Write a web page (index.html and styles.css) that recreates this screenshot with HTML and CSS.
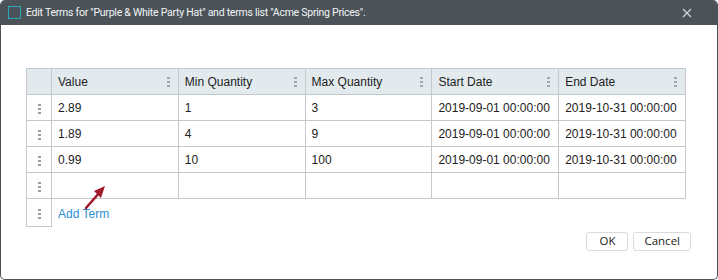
FILE: index.html
```html
<!DOCTYPE html>
<html lang="en">
<head>
<meta charset="UTF-8">
<title>Edit Terms</title>
<link rel="stylesheet" href="styles.css">
</head>
<body>

<div class="dialog">
    <div class="titlebar">
        <span class="title-icon"></span>
        <span class="title-text">Edit Terms for "Purple &amp; White Party Hat" and terms list "Acme Spring Prices".</span>
        <svg class="close" width="10" height="10" viewBox="0 0 10 10">
            <path d="M1 1 L9 9 M9 1 L1 9" stroke="#d4d8db" stroke-width="1.2" fill="none"/>
        </svg>
    </div>

    <div class="body">
        <div class="grid-wrap">
            <table class="grid">
                <colgroup>
                    <col class="col-handle">
                    <col><col><col><col><col>
                </colgroup>
                <thead>
                    <tr>
                        <th></th>
                        <th><div class="th-inner">Value<span class="dots"></span></div></th>
                        <th><div class="th-inner">Min Quantity<span class="dots"></span></div></th>
                        <th><div class="th-inner">Max Quantity<span class="dots"></span></div></th>
                        <th><div class="th-inner">Start Date<span class="dots"></span></div></th>
                        <th><div class="th-inner">End Date<span class="dots"></span></div></th>
                    </tr>
                </thead>
                <tbody>
                    <tr>
                        <td class="handle"><span class="dots"></span></td>
                        <td>2.89</td><td>1</td><td>3</td>
                        <td>2019-09-01 00:00:00</td><td>2019-10-31 00:00:00</td>
                    </tr>
                    <tr>
                        <td class="handle"><span class="dots"></span></td>
                        <td>1.89</td><td>4</td><td>9</td>
                        <td>2019-09-01 00:00:00</td><td>2019-10-31 00:00:00</td>
                    </tr>
                    <tr>
                        <td class="handle"><span class="dots"></span></td>
                        <td>0.99</td><td>10</td><td>100</td>
                        <td>2019-09-01 00:00:00</td><td>2019-10-31 00:00:00</td>
                    </tr>
                    <tr>
                        <td class="handle"><span class="dots"></span></td>
                        <td></td><td></td><td></td><td></td><td></td>
                    </tr>
                    <tr class="add-row">
                        <td class="handle"><span class="dots"></span></td>
                        <td colspan="5" class="add-cell"><a href="#" class="add-link">Add Term</a></td>
                    </tr>
                </tbody>
            </table>

            <!-- pointer arrow drawn over the empty row -->
            <svg class="arrow" width="24" height="26" viewBox="0 0 24 26">
                <path d="M2 24 L16 8" stroke="#a01c2a" stroke-width="2.6" stroke-linecap="round" fill="none"/>
                <path d="M21 2 L10 7 L17 14 Z" fill="#a01c2a"/>
            </svg>
        </div>

        <div class="actions">
            <button class="btn btn-ok">OK</button>
            <button class="btn">Cancel</button>
        </div>
    </div>
</div>

</body>
</html>
```

FILE: styles.css
```css
html, body {
    margin: 0;
    padding: 0;
    background: #fff;
}

.dialog {
    width: 718px;
    height: 280px;
    box-sizing: border-box;
    border: 1px solid #4b5359;
    border-top: none;
    border-radius: 5px;
    overflow: hidden;
    display: flex;
    flex-direction: column;
    background: #fff;
}

.titlebar {
    height: 25px;
    background: #4b5359;
    display: flex;
    align-items: center;
    padding: 0 0 0 7px;
    flex-shrink: 0;
}

.title-icon {
    width: 11px;
    height: 11px;
    border: 1px solid #2aa6b6;
    margin-right: 5px;
}

.title-text {
    font-family: Roboto, sans-serif;
    font-size: 10.5px;
    letter-spacing: -0.25px;
    color: #f2f4f5;
    flex: 1;
    white-space: nowrap;
}

.close {
    margin-right: 25px;
}

.body {
    flex: 1;
    display: flex;
    flex-direction: column;
    padding: 43px 26px 0 25px;
}

.grid-wrap {
    position: relative;
}

.grid {
    border-collapse: collapse;
    table-layout: fixed;
    width: 660px;
    font-family: "Liberation Sans", Arial, sans-serif;
    font-size: 12px;
    color: #222;
}

.col-handle {
    width: 25px;
}

.grid th,
.grid td {
    border: 1px solid #c3c8cc;
    height: 25px;
    padding: 0 0 0 6px;
    text-align: left;
    white-space: nowrap;
    overflow: hidden;
}

.grid th {
    background: #e3eaee;
    font-weight: normal;
}

.th-inner {
    display: flex;
    align-items: center;
    justify-content: space-between;
    padding-right: 8px;
}

.dots {
    display: inline-block;
    width: 3px;
    height: 11px;
    background-image: radial-gradient(circle, #a2a8ad 1.2px, transparent 1.4px);
    background-size: 3px 4px;
    background-repeat: repeat-y;
}

.grid td.handle {
    padding: 0;
    text-align: center;
}

.grid td.handle .dots {
    vertical-align: middle;
    background-image: radial-gradient(circle, #9a9fa3 1.2px, transparent 1.4px);
}

.add-row td.add-cell {
    border: none;
    padding-top: 2px;
}

.add-link {
    color: #2a8fd4;
    text-decoration: none;
    font-size: 12px;
}

.arrow {
    position: absolute;
    left: 58px;
    top: 116px;
}

.actions {
    display: flex;
    justify-content: flex-end;
    gap: 5px;
    margin-top: 5px;
}

.btn {
    font-family: "Open Sans", sans-serif;
    font-size: 11.5px;
    color: #222;
    background: #fff;
    border: 1px solid #d9dcde;
    border-radius: 3px;
    height: 19px;
    padding: 0 10px;
    line-height: 16px;
}

.btn-ok {
    padding: 0 12px;
}
```
